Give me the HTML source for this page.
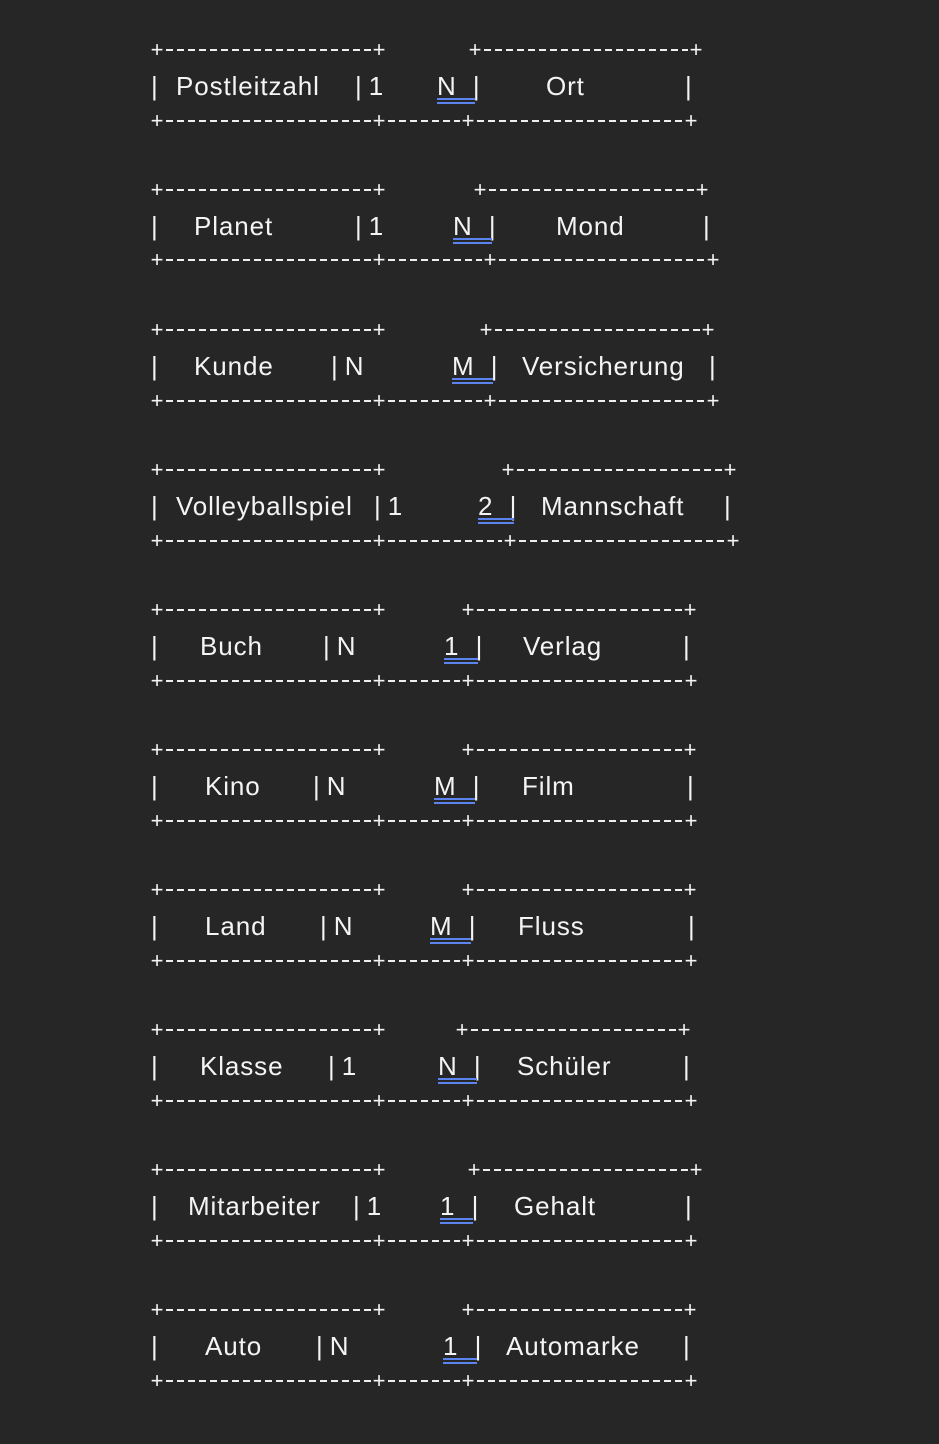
<!DOCTYPE html>
<html><head><meta charset="utf-8">
<style>
html,body{margin:0;padding:0;background:#262626;}
body{width:939px;height:1444px;position:relative;overflow:hidden;font-family:"Liberation Sans",sans-serif;color:#f4f4f4;}
.p{position:absolute;width:14px;text-align:center;font-size:22px;line-height:22px;margin-top:1px;}
.d{position:absolute;height:2px;margin-top:1px;background:repeating-linear-gradient(90deg,#eeeeee 0 7px,transparent 7px 11px);}
.t{position:absolute;font-size:26px;line-height:30px;white-space:pre;letter-spacing:0.9px;margin-top:-1px;}
.u{position:absolute;height:2px;background:#5b84ee;}
</style></head><body>

<!-- Row 1 -->
<div class="p" style="left:150px;top:38px">+</div><div class="d" style="left:166px;top:48px;width:205px"></div><div class="p" style="left:372px;top:38px">+</div>
<div class="p" style="left:468px;top:38px">+</div><div class="d" style="left:484px;top:48px;width:204px"></div><div class="p" style="left:689px;top:38px">+</div>
<div class="t" style="left:151px;top:72px">|</div><div class="t" style="left:176px;top:72px">Postleitzahl</div><div class="t" style="left:355px;top:72px">|&#8201;1</div><div class="t" style="left:437px;top:72px">N  |</div><div class="t" style="left:546px;top:72px">Ort</div><div class="t" style="left:685px;top:72px">|</div>
<div class="u" style="left:437px;top:98px;width:38px"></div><div class="u" style="left:437px;top:102px;width:38px"></div>
<div class="p" style="left:150px;top:109px">+</div><div class="d" style="left:166px;top:119px;width:205px"></div><div class="p" style="left:372px;top:109px">+</div><div class="d" style="left:388px;top:119px;width:72px"></div><div class="p" style="left:461px;top:109px">+</div><div class="d" style="left:477px;top:119px;width:206px"></div><div class="p" style="left:684px;top:109px">+</div>

<!-- Row 2 -->
<div class="p" style="left:150px;top:178px">+</div><div class="d" style="left:166px;top:188px;width:205px"></div><div class="p" style="left:372px;top:178px">+</div>
<div class="p" style="left:473px;top:178px">+</div><div class="d" style="left:489px;top:188px;width:205px"></div><div class="p" style="left:695px;top:178px">+</div>
<div class="t" style="left:151px;top:212px">|</div><div class="t" style="left:194px;top:212px">Planet</div><div class="t" style="left:355px;top:212px">|&#8201;1</div><div class="t" style="left:453px;top:212px">N  |</div><div class="t" style="left:556px;top:212px">Mond</div><div class="t" style="left:703px;top:212px">|</div>
<div class="u" style="left:453px;top:238px;width:39px"></div><div class="u" style="left:453px;top:242px;width:39px"></div>
<div class="p" style="left:150px;top:248px">+</div><div class="d" style="left:166px;top:258px;width:205px"></div><div class="p" style="left:372px;top:248px">+</div><div class="d" style="left:388px;top:258px;width:94px"></div><div class="p" style="left:483px;top:248px">+</div><div class="d" style="left:499px;top:258px;width:206px"></div><div class="p" style="left:706px;top:248px">+</div>

<!-- Row 3 -->
<div class="p" style="left:150px;top:318px">+</div><div class="d" style="left:166px;top:328px;width:205px"></div><div class="p" style="left:372px;top:318px">+</div>
<div class="p" style="left:479px;top:318px">+</div><div class="d" style="left:495px;top:328px;width:205px"></div><div class="p" style="left:701px;top:318px">+</div>
<div class="t" style="left:151px;top:352px">|</div><div class="t" style="left:194px;top:352px">Kunde</div><div class="t" style="left:331px;top:352px">|&#8201;N</div><div class="t" style="left:452px;top:352px">M  |</div><div class="t" style="left:522px;top:352px">Versicherung</div><div class="t" style="left:709px;top:352px">|</div>
<div class="u" style="left:452px;top:378px;width:41px"></div><div class="u" style="left:452px;top:382px;width:41px"></div>
<div class="p" style="left:150px;top:389px">+</div><div class="d" style="left:166px;top:399px;width:205px"></div><div class="p" style="left:372px;top:389px">+</div><div class="d" style="left:388px;top:399px;width:94px"></div><div class="p" style="left:483px;top:389px">+</div><div class="d" style="left:499px;top:399px;width:206px"></div><div class="p" style="left:706px;top:389px">+</div>

<!-- Row 4 -->
<div class="p" style="left:150px;top:458px">+</div><div class="d" style="left:166px;top:468px;width:205px"></div><div class="p" style="left:372px;top:458px">+</div>
<div class="p" style="left:501px;top:458px">+</div><div class="d" style="left:517px;top:468px;width:205px"></div><div class="p" style="left:723px;top:458px">+</div>
<div class="t" style="left:151px;top:492px">|</div><div class="t" style="left:176px;top:492px">Volleyballspiel</div><div class="t" style="left:374px;top:492px">|&#8201;1</div><div class="t" style="left:478px;top:492px">2  |</div><div class="t" style="left:541px;top:492px">Mannschaft</div><div class="t" style="left:724px;top:492px">|</div>
<div class="u" style="left:478px;top:518px;width:36px"></div><div class="u" style="left:478px;top:522px;width:36px"></div>
<div class="p" style="left:150px;top:529px">+</div><div class="d" style="left:166px;top:539px;width:205px"></div><div class="p" style="left:372px;top:529px">+</div><div class="d" style="left:388px;top:539px;width:114px"></div><div class="p" style="left:503px;top:529px">+</div><div class="d" style="left:519px;top:539px;width:206px"></div><div class="p" style="left:726px;top:529px">+</div>

<!-- Row 5 -->
<div class="p" style="left:150px;top:598px">+</div><div class="d" style="left:166px;top:608px;width:205px"></div><div class="p" style="left:372px;top:598px">+</div>
<div class="p" style="left:461px;top:598px">+</div><div class="d" style="left:477px;top:608px;width:205px"></div><div class="p" style="left:683px;top:598px">+</div>
<div class="t" style="left:151px;top:632px">|</div><div class="t" style="left:200px;top:632px">Buch</div><div class="t" style="left:323px;top:632px">|&#8201;N</div><div class="t" style="left:444px;top:632px">1  |</div><div class="t" style="left:523px;top:632px">Verlag</div><div class="t" style="left:683px;top:632px">|</div>
<div class="u" style="left:444px;top:658px;width:34px"></div><div class="u" style="left:444px;top:662px;width:34px"></div>
<div class="p" style="left:150px;top:669px">+</div><div class="d" style="left:166px;top:679px;width:205px"></div><div class="p" style="left:372px;top:669px">+</div><div class="d" style="left:388px;top:679px;width:72px"></div><div class="p" style="left:461px;top:669px">+</div><div class="d" style="left:477px;top:679px;width:206px"></div><div class="p" style="left:684px;top:669px">+</div>

<!-- Row 6 -->
<div class="p" style="left:150px;top:738px">+</div><div class="d" style="left:166px;top:748px;width:205px"></div><div class="p" style="left:372px;top:738px">+</div>
<div class="p" style="left:461px;top:738px">+</div><div class="d" style="left:477px;top:748px;width:205px"></div><div class="p" style="left:683px;top:738px">+</div>
<div class="t" style="left:151px;top:772px">|</div><div class="t" style="left:205px;top:772px">Kino</div><div class="t" style="left:313px;top:772px">|&#8201;N</div><div class="t" style="left:434px;top:772px">M  |</div><div class="t" style="left:522px;top:772px">Film</div><div class="t" style="left:687px;top:772px">|</div>
<div class="u" style="left:434px;top:798px;width:41px"></div><div class="u" style="left:434px;top:802px;width:41px"></div>
<div class="p" style="left:150px;top:809px">+</div><div class="d" style="left:166px;top:819px;width:205px"></div><div class="p" style="left:372px;top:809px">+</div><div class="d" style="left:388px;top:819px;width:72px"></div><div class="p" style="left:461px;top:809px">+</div><div class="d" style="left:477px;top:819px;width:206px"></div><div class="p" style="left:684px;top:809px">+</div>

<!-- Row 7 -->
<div class="p" style="left:150px;top:878px">+</div><div class="d" style="left:166px;top:888px;width:205px"></div><div class="p" style="left:372px;top:878px">+</div>
<div class="p" style="left:461px;top:878px">+</div><div class="d" style="left:477px;top:888px;width:205px"></div><div class="p" style="left:683px;top:878px">+</div>
<div class="t" style="left:151px;top:912px">|</div><div class="t" style="left:205px;top:912px">Land</div><div class="t" style="left:320px;top:912px">|&#8201;N</div><div class="t" style="left:430px;top:912px">M  |</div><div class="t" style="left:518px;top:912px">Fluss</div><div class="t" style="left:688px;top:912px">|</div>
<div class="u" style="left:430px;top:938px;width:41px"></div><div class="u" style="left:430px;top:942px;width:41px"></div>
<div class="p" style="left:150px;top:949px">+</div><div class="d" style="left:166px;top:959px;width:205px"></div><div class="p" style="left:372px;top:949px">+</div><div class="d" style="left:388px;top:959px;width:72px"></div><div class="p" style="left:461px;top:949px">+</div><div class="d" style="left:477px;top:959px;width:206px"></div><div class="p" style="left:684px;top:949px">+</div>

<!-- Row 8 -->
<div class="p" style="left:150px;top:1018px">+</div><div class="d" style="left:166px;top:1028px;width:205px"></div><div class="p" style="left:372px;top:1018px">+</div>
<div class="p" style="left:455px;top:1018px">+</div><div class="d" style="left:471px;top:1028px;width:205px"></div><div class="p" style="left:677px;top:1018px">+</div>
<div class="t" style="left:151px;top:1052px">|</div><div class="t" style="left:200px;top:1052px">Klasse</div><div class="t" style="left:328px;top:1052px">|&#8201;1</div><div class="t" style="left:438px;top:1052px">N  |</div><div class="t" style="left:517px;top:1052px">Schüler</div><div class="t" style="left:683px;top:1052px">|</div>
<div class="u" style="left:438px;top:1078px;width:39px"></div><div class="u" style="left:438px;top:1082px;width:39px"></div>
<div class="p" style="left:150px;top:1089px">+</div><div class="d" style="left:166px;top:1099px;width:205px"></div><div class="p" style="left:372px;top:1089px">+</div><div class="d" style="left:388px;top:1099px;width:72px"></div><div class="p" style="left:461px;top:1089px">+</div><div class="d" style="left:477px;top:1099px;width:206px"></div><div class="p" style="left:684px;top:1089px">+</div>

<!-- Row 9 -->
<div class="p" style="left:150px;top:1158px">+</div><div class="d" style="left:166px;top:1168px;width:205px"></div><div class="p" style="left:372px;top:1158px">+</div>
<div class="p" style="left:467px;top:1158px">+</div><div class="d" style="left:483px;top:1168px;width:205px"></div><div class="p" style="left:689px;top:1158px">+</div>
<div class="t" style="left:151px;top:1192px">|</div><div class="t" style="left:188px;top:1192px">Mitarbeiter</div><div class="t" style="left:353px;top:1192px">|&#8201;1</div><div class="t" style="left:440px;top:1192px">1  |</div><div class="t" style="left:514px;top:1192px">Gehalt</div><div class="t" style="left:685px;top:1192px">|</div>
<div class="u" style="left:440px;top:1218px;width:33px"></div><div class="u" style="left:440px;top:1222px;width:33px"></div>
<div class="p" style="left:150px;top:1229px">+</div><div class="d" style="left:166px;top:1239px;width:205px"></div><div class="p" style="left:372px;top:1229px">+</div><div class="d" style="left:388px;top:1239px;width:72px"></div><div class="p" style="left:461px;top:1229px">+</div><div class="d" style="left:477px;top:1239px;width:206px"></div><div class="p" style="left:684px;top:1229px">+</div>

<!-- Row 10 -->
<div class="p" style="left:150px;top:1298px">+</div><div class="d" style="left:166px;top:1308px;width:205px"></div><div class="p" style="left:372px;top:1298px">+</div>
<div class="p" style="left:461px;top:1298px">+</div><div class="d" style="left:477px;top:1308px;width:205px"></div><div class="p" style="left:683px;top:1298px">+</div>
<div class="t" style="left:151px;top:1332px">|</div><div class="t" style="left:205px;top:1332px">Auto</div><div class="t" style="left:316px;top:1332px">|&#8201;N</div><div class="t" style="left:443px;top:1332px">1  |</div><div class="t" style="left:506px;top:1332px">Automarke</div><div class="t" style="left:683px;top:1332px">|</div>
<div class="u" style="left:443px;top:1358px;width:34px"></div><div class="u" style="left:443px;top:1362px;width:34px"></div>
<div class="p" style="left:150px;top:1369px">+</div><div class="d" style="left:166px;top:1379px;width:205px"></div><div class="p" style="left:372px;top:1369px">+</div><div class="d" style="left:388px;top:1379px;width:72px"></div><div class="p" style="left:461px;top:1369px">+</div><div class="d" style="left:477px;top:1379px;width:206px"></div><div class="p" style="left:684px;top:1369px">+</div>

</body></html>
